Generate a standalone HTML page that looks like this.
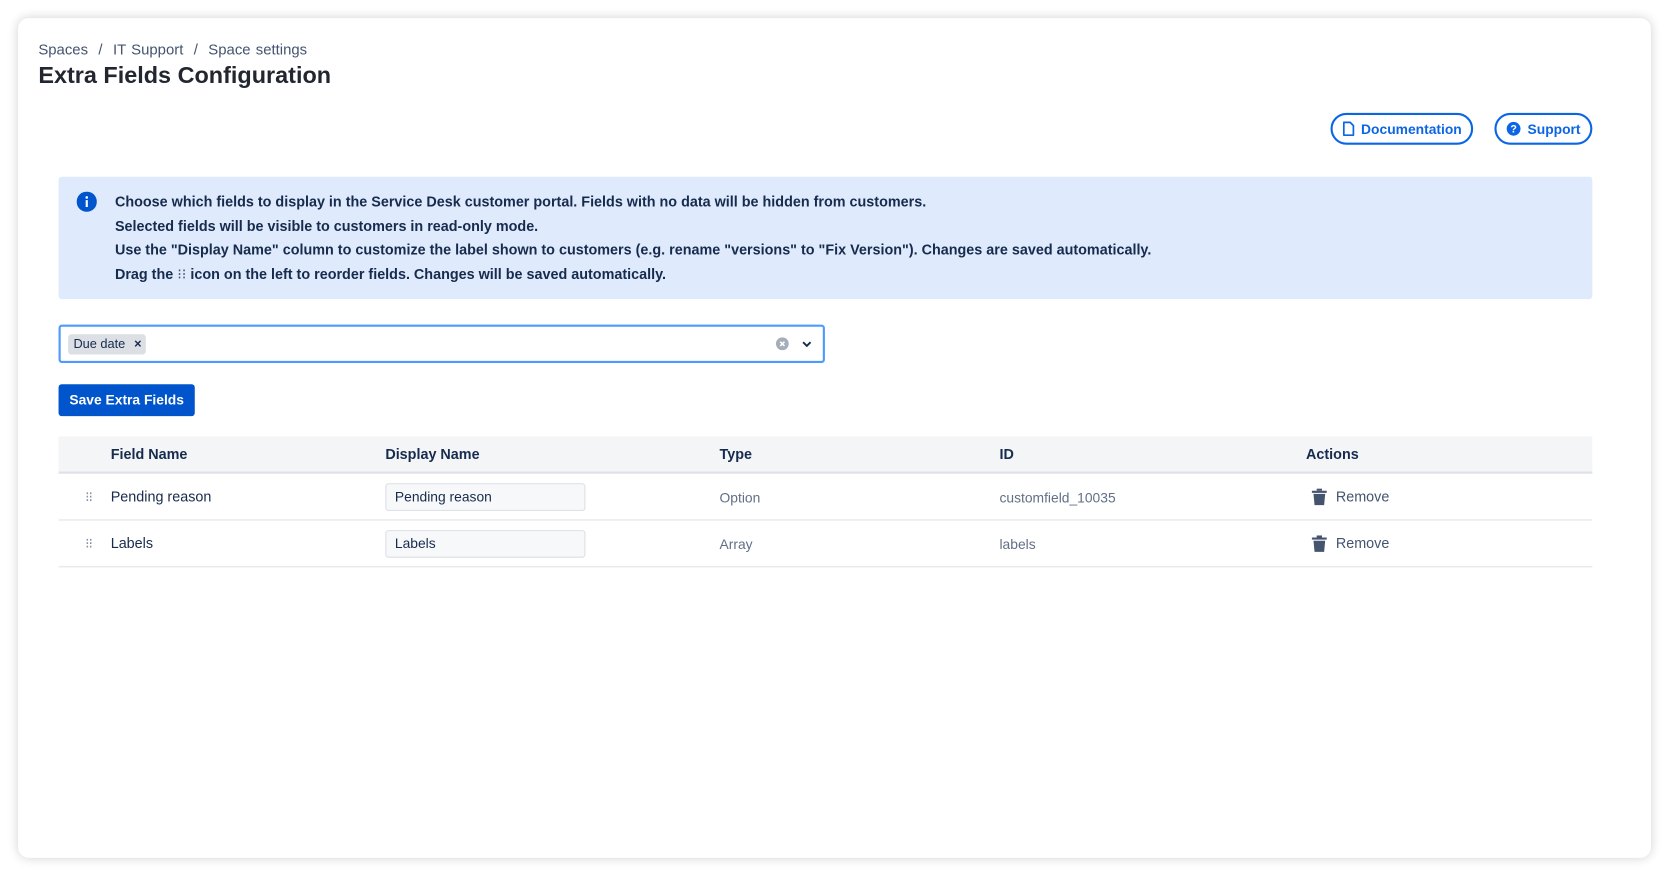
<!DOCTYPE html>
<html><head><meta charset="utf-8"><style>
html,body{margin:0;padding:0;width:1669px;height:877px;overflow:hidden;background:#fff;}
body{font-family:"Liberation Sans",Arial,sans-serif;color:#172b4d;}
#s{position:absolute;left:0;top:0;width:1568px;height:824px;transform:scale(1.06441);transform-origin:0 0;}
.card{position:absolute;left:17px;top:17px;width:1534px;height:789px;background:#fff;border-radius:10px;box-shadow:0 0 10px rgba(0,0,0,0.18);}
.a{position:absolute;}
.bc{left:36px;top:38px;font-size:14px;color:#44546f;word-spacing:1px}
.title{left:36px;top:58px;font-size:22px;font-weight:bold;color:#22262e;}
.pill{height:26px;border:2px solid #0c66e4;border-radius:16px;color:#0c66e4;font-weight:bold;font-size:13px;display:flex;align-items:center;justify-content:center;gap:6px;box-sizing:content-box}
.info{left:55px;top:166px;width:1441px;height:115px;background:#dfeafd;border-radius:3px;}
.info p{position:absolute;left:53px;margin:0;font-size:13.5px;font-weight:bold;color:#172b4d;white-space:nowrap}
.th{font-size:13.5px;font-weight:bold;color:#172b4d;top:419px}
.td{font-size:13.5px;}
.muted{color:#626f86;font-size:13px}
.inp{border:1px solid #dcdfe4;background:#f7f8f9;border-radius:3px;font-size:13px;line-height:24px;padding-left:8px;box-sizing:border-box;width:188px;height:26px}
.drag{font-size:13px;color:#8590a2;letter-spacing:-1px}
</style></head><body><div id="s">
<div class="card"></div>
<div class="a bc">Spaces &nbsp;/&nbsp; IT Support &nbsp;/&nbsp; Space settings</div>
<div class="a title">Extra Fields Configuration</div>
<div class="a pill" style="left:1250px;top:106px;width:130px;">
<svg width="12" height="14" viewBox="0 0 12 14"><path d="M1.5 1h6l3 3v9h-9z" fill="none" stroke="#0c66e4" stroke-width="1.6" stroke-linejoin="round"/></svg>Documentation</div>
<div class="a pill" style="left:1404px;top:106px;width:88px;">
<svg width="14" height="14" viewBox="0 0 14 14"><circle cx="7" cy="7" r="6.5" fill="#0c66e4"/><text x="7" y="10.5" text-anchor="middle" font-size="10" font-weight="bold" fill="#fff" font-family="Liberation Sans">?</text></svg>Support</div>
<div class="a info">
<svg style="position:absolute;left:17px;top:14px" width="19" height="19" viewBox="0 0 19 19"><circle cx="9.5" cy="9.5" r="9.5" fill="#0055cc"/><rect x="8.5" y="8" width="2" height="6.5" fill="#fff"/><circle cx="9.5" cy="5.5" r="1.2" fill="#fff"/></svg>
<p style="top:16px">Choose which fields to display in the Service Desk customer portal. Fields with no data will be hidden from customers.</p>
<p style="top:39px">Selected fields will be visible to customers in read-only mode.</p>
<p style="top:61px">Use the "Display Name" column to customize the label shown to customers (e.g. rename "versions" to "Fix Version"). Changes are saved automatically.</p>
<p style="top:84px">Drag the <span style="font-weight:normal;color:#44546f">⁝⁝</span> icon on the left to reorder fields. Changes will be saved automatically.</p>
</div>
<div class="a" style="left:55px;top:305px;width:720px;height:36px;border:2px solid #4c9aff;border-radius:3px;box-sizing:border-box"></div>
<div class="a" style="left:64px;top:314px;width:73px;height:19px;background:#dcdfe4;border-radius:3px;font-size:12px;line-height:19px;color:#172b4d;padding-left:5px;box-sizing:border-box">Due date <span style="margin-left:5px;font-weight:bold">×</span></div>
<svg class="a" style="left:729px;top:317px" width="12" height="12" viewBox="0 0 12 12"><circle cx="6" cy="6" r="6" fill="#a5adba"/><path d="M4 4l4 4M8 4l-4 4" stroke="#fff" stroke-width="1.5"/></svg>
<svg class="a" style="left:753px;top:320px" width="10" height="7" viewBox="0 0 10 7"><path d="M1.5 1.5l3.5 3.5 3.5-3.5" fill="none" stroke="#172b4d" stroke-width="1.8"/></svg>
<div class="a" style="left:55px;top:361px;width:128px;height:30px;background:#0055cc;border-radius:3px;color:#fff;font-weight:bold;font-size:13px;line-height:30px;text-align:center">Save Extra Fields</div>
<div class="a" style="left:55px;top:410px;width:1441px;height:33px;background:#f4f5f7;border-bottom:2px solid #dfe1e6"></div>
<div class="a th" style="left:104px">Field Name</div>
<div class="a th" style="left:362px">Display Name</div>
<div class="a th" style="left:676px">Type</div>
<div class="a th" style="left:939px">ID</div>
<div class="a th" style="left:1227px">Actions</div>
<div class="a" style="left:55px;top:488px;width:1441px;height:1px;background:#dfe1e6"></div>
<div class="a" style="left:55px;top:532px;width:1441px;height:1px;background:#dfe1e6"></div>

<div class="a drag" style="left:80px;top:459px">⁝⁝</div>
<div class="a td" style="left:104px;top:459px">Pending reason</div>
<div class="a inp" style="left:362px;top:454px">Pending reason</div>
<div class="a muted" style="left:676px;top:460px">Option</div>
<div class="a muted" style="left:939px;top:460px">customfield_10035</div>

<div class="a drag" style="left:80px;top:503px">⁝⁝</div>
<div class="a td" style="left:104px;top:503px">Labels</div>
<div class="a inp" style="left:362px;top:498px">Labels</div>
<div class="a muted" style="left:676px;top:504px">Array</div>
<div class="a muted" style="left:939px;top:504px">labels</div>

<svg class="a" style="left:1232px;top:459px" width="15" height="16" viewBox="0 0 15 16"><rect x="0.5" y="2" width="14" height="2" rx="0.5" fill="#44546f"/><rect x="5" y="0" width="5" height="2" fill="#44546f"/><path d="M2 5h11l-1 10.5H3z" fill="#44546f"/></svg>
<div class="a td" style="left:1255px;top:459px;color:#44546f">Remove</div>
<svg class="a" style="left:1232px;top:503px" width="15" height="16" viewBox="0 0 15 16"><rect x="0.5" y="2" width="14" height="2" rx="0.5" fill="#44546f"/><rect x="5" y="0" width="5" height="2" fill="#44546f"/><path d="M2 5h11l-1 10.5H3z" fill="#44546f"/></svg>
<div class="a td" style="left:1255px;top:503px;color:#44546f">Remove</div>
</div></body></html>
